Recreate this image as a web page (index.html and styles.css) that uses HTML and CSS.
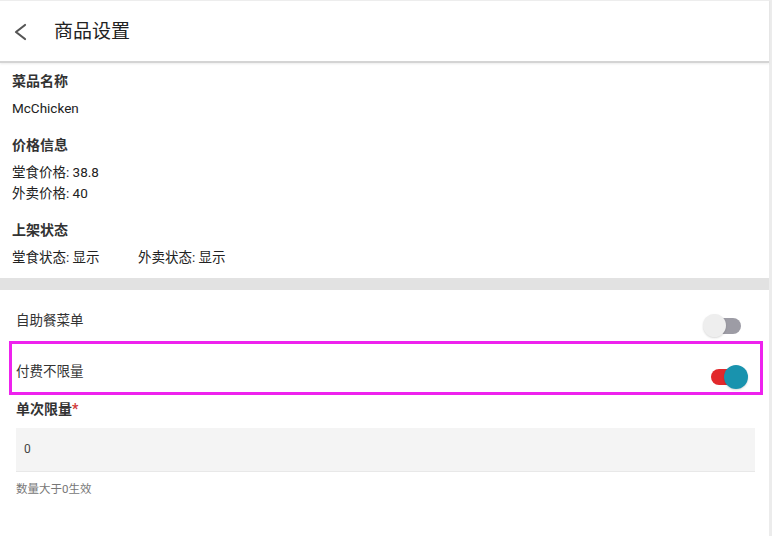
FILE: index.html
```html
<!DOCTYPE html>
<html lang="zh">
<head>
<meta charset="utf-8">
<title>商品设置</title>
<link rel="stylesheet" href="styles.css">
</head>
<body>
<div class="page">
  <header class="topbar">
    <svg class="back" width="16" height="20" viewBox="0 0 16 20"><polyline points="12,3 3,10 12,17" fill="none" stroke="#555" stroke-width="2.2" stroke-linecap="round" stroke-linejoin="round"/></svg>
    <h1 class="title">商品设置</h1>
  </header>

  <section class="info">
    <div class="group">
      <div class="label">菜品名称</div>
      <div class="value">McChicken</div>
    </div>
    <div class="group">
      <div class="label">价格信息</div>
      <div class="value">堂食价格: 38.8</div>
      <div class="value">外卖价格: 40</div>
    </div>
    <div class="group last">
      <div class="label">上架状态</div>
      <div class="value status"><span class="status-item">堂食状态: 显示</span><span>外卖状态: 显示</span></div>
    </div>
  </section>

  <div class="band"></div>

  <section class="settings">
    <div class="row">
      <span class="row-text">自助餐菜单</span>
      <span class="switch off"><span class="track"></span><span class="thumb"></span></span>
    </div>
    <div class="row highlighted">
      <span class="row-text">付费不限量</span>
      <span class="switch on"><span class="track"></span><span class="thumb"></span></span>
      <span class="highlight"></span>
    </div>
    <div class="field">
      <div class="field-label">单次限量<span class="req">*</span></div>
      <div class="input">0</div>
      <div class="hint">数量大于0生效</div>
    </div>
  </section>
</div>
</body>
</html>
```

FILE: styles.css
```css
* { box-sizing: border-box; }
html, body { margin: 0; padding: 0; background: #fff; }
body {
  font-family: Roboto, "Noto Sans CJK SC", "Noto Sans", sans-serif;
  color: #333;
  width: 772px;
  height: 536px;
  overflow: hidden;
}
.page {
  width: 772px;
  height: 536px;
  border-right: 3px solid #ececec;
}
.topbar {
  height: 63px;
  display: flex;
  align-items: center;
  padding-left: 13px;
  border-top: 1px solid #ededed;
  border-bottom: 2px solid #d4d4d4;
  box-shadow: 0 1px 2px rgba(0,0,0,0.08);
}
.back { display: block; margin-top: 1px; }
.title {
  margin: 2px 0 0 25px;
  font-size: 19px;
  font-weight: normal;
  color: #222;
  line-height: 24px;
}
.info { padding: 8px 12px 10px; }
.group { margin-bottom: 16px; }
.group.last { margin-bottom: 0; }
.label {
  font-size: 14px;
  font-weight: bold;
  line-height: 21px;
  color: #333;
  margin-bottom: 6px;
}
.value {
  font-size: 13.5px;
  line-height: 21px;
  color: #222;
}
.status { display: flex; }
.status-item { width: 126px; }
.band { height: 12px; background: #e2e2e2; }
.settings { padding: 0; }
.row {
  position: relative;
  height: 51px;
  display: flex;
  align-items: flex-start;
  justify-content: space-between;
  padding: 20px 28px 0 16px;
}
.row.highlighted { height: 54px; }
.row-text { font-size: 13.5px; line-height: 21px; color: #333; }
.switch {
  position: relative;
  width: 38px;
  height: 24px;
  margin-top: 4px;
}
.switch .track {
  position: absolute;
  left: 12px;
  top: 4px;
  width: 26px;
  height: 16px;
  border-radius: 8px;
  background: #9d9ca5;
}
.switch .thumb {
  position: absolute;
  left: 0;
  top: 0;
  width: 23px;
  height: 23px;
  border-radius: 50%;
  background: #eeeeee;
  box-shadow: 0 1px 2px rgba(0,0,0,0.15);
}
.switch.on { margin-right: -8px; }
.switch.on .track { left: 0; width: 26px; background: #e2292c; }
.switch.on .thumb { left: 13px; width: 24px; height: 24px; background: #1993ae; }
.highlight {
  position: absolute;
  left: 9px;
  right: 6px;
  top: 0;
  bottom: 0;
  border: 3px solid #ee22ee;
  pointer-events: none;
}
.field { padding: 4px 14px 0 16px; }
.field-label {
  font-size: 14px;
  font-weight: bold;
  line-height: 21px;
  color: #333;
}
.req { color: #d23a3a; }
.input {
  margin-top: 8px;
  height: 44px;
  background: #f4f4f4;
  border-bottom: 1px solid #e8e8e8;
  font-size: 12px;
  line-height: 43px;
  padding-left: 8px;
  color: #444;
}
.hint {
  margin-top: 8px;
  font-size: 11.5px;
  line-height: 18px;
  color: #777;
}
```
